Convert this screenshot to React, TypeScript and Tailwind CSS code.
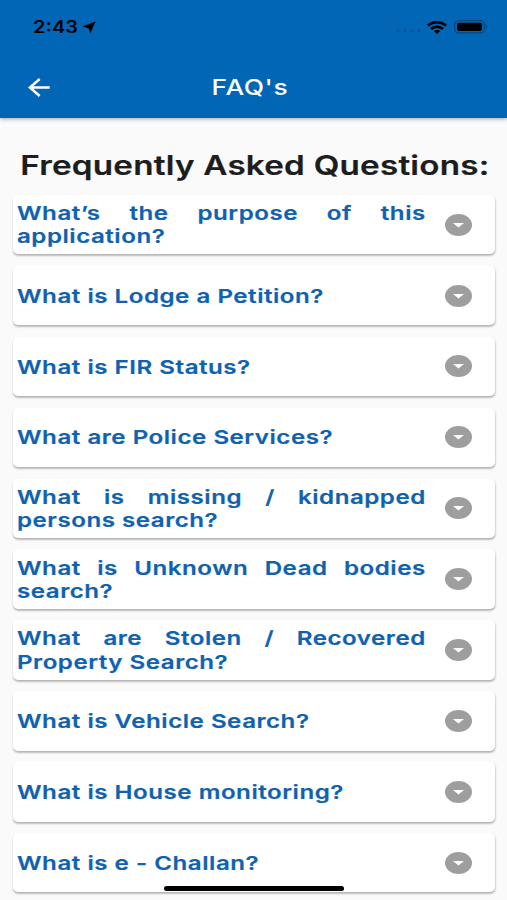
const questions: string[][] = [
  ["What’s the purpose of this", "application?"],
  ["What is Lodge a Petition?"],
  ["What is FIR Status?"],
  ["What are Police Services?"],
  ["What is missing / kidnapped", "persons search?"],
  ["What is Unknown Dead bodies", "search?"],
  ["What are Stolen / Recovered", "Property Search?"],
  ["What is Vehicle Search?"],
  ["What is House monitoring?"],
  ["What is e - Challan?"],
];

function StatusBar() {
  return (
    <div className="flex h-[54px] items-center pl-[33px] pr-[19px] text-black">
      <span className="w-[49px] origin-left scale-x-[1.18] whitespace-nowrap text-[17px] font-semibold leading-none">2:43</span>
      <svg className="h-[13px] w-[14px]" viewBox="0 0 14 13" fill="currentColor">
        <path d="M13.6.6 8.3 12.4 6.6 7.2.2 5.6Z" />
      </svg>
      <div className="ml-auto flex items-center">
        <div className="mr-[6px] mt-[7px] flex gap-[3px]">
          {[0, 1, 2, 3].map((n) => (
            <span key={n} className="h-[3px] w-[4px] rounded-full bg-[#0858a0]" />
          ))}
        </div>
        <svg className="mr-[7px] h-[13px] w-[20px]" viewBox="0 0 20 13" fill="none" stroke="currentColor" strokeWidth="2.6">
          <path d="M.8 4.5Q10-2.3 19.2 4.5M4 7.9q6-4.5 12 0" />
          <path d="M6.7 9.9q3.3-2.5 6.6 0L10 12.9Z" fill="currentColor" stroke="none" />
        </svg>
        <svg className="h-[14px] w-[34px]" viewBox="0 0 34 14">
          <rect x=".7" y=".7" width="29.6" height="12.1" rx="3.6" fill="none" stroke="#07457d" strokeWidth="1.2" />
          <rect x="3" y="2.7" width="25" height="8.2" rx="1.8" fill="#000" />
          <path d="M31.8 4.5q2.4 2.2 0 4.5Z" fill="#07457d" />
        </svg>
      </div>
    </div>
  );
}

function Question({ lines }: { lines: string[] }) {
  return (
    <li className="flex h-[59.4px] shrink-0 items-center rounded-[5px] bg-white pl-[4px] pr-[23px] shadow-[0_2px_2px_rgba(0,0,0,0.22),1px_1px_2px_rgba(0,0,0,0.1)]">
      <div className="w-[327px] origin-left scale-x-[1.25] pt-[1.4px] text-[19.3px] font-semibold leading-[23.3px] tracking-[0.42px] text-[#0f62b0] [-webkit-text-stroke:0.2px_#0f62b0]">
        {lines.map((line, i) => (
          <p
            key={line}
            className={
              lines.length > 1 && i === 0
                ? "whitespace-nowrap [text-align-last:justify]"
                : "whitespace-nowrap"
            }
          >
            {line}
          </p>
        ))}
      </div>
      <svg className="ml-auto h-[22px] w-[27px]" viewBox="0 0 27 22">
        <ellipse cx="13.5" cy="11" rx="13.5" ry="11" fill="#9e9e9e" />
        <path d="M8 8.9h11l-5.5 4.7Z" fill="#fff" />
      </svg>
    </li>
  );
}

export default function App() {
  return (
    <div className="relative h-[900px] w-[507px] overflow-hidden bg-[#fafafa] font-[Inter,'Liberation_Sans',sans-serif]">
      <header className="relative h-[118px] bg-[#0066b5] shadow-[0_1px_4px_rgba(0,0,0,0.35)]">
        <StatusBar />
        <div className="grid h-[66px] grid-cols-[1fr_auto_1fr] items-center pl-[20px] pr-[28px]">
          <svg className="ml-[8px] h-[19px] w-[22px]" viewBox="0 0 22 19" fill="none" stroke="#fff" strokeWidth="2.5">
            <path d="M21.7 9.5H1.8M11.7 1 1.8 9.5l9.9 8.5" />
          </svg>
          <h1 className="scale-x-[1.2] text-[22px] font-medium leading-none tracking-[0.5px] text-white">FAQ's</h1>
        </div>
      </header>
      <main>
        <h2 className="h-[77px] origin-left scale-x-[1.23] whitespace-nowrap pl-[16.5px] pt-[32px] text-[27px] font-semibold leading-[32px] tracking-[0.18px] text-[#1d1d1d] [-webkit-text-stroke:0.2px_#1d1d1d]">
          Frequently Asked Questions:
        </h2>
        <ul className="flex flex-col gap-[11.5px] pl-[13px] pr-[12px]">
          {questions.map((lines) => (
            <Question key={lines[0]} lines={lines} />
          ))}
        </ul>
      </main>
      <div className="absolute bottom-[9px] left-[164px] h-[5px] w-[180px] rounded-full bg-black" />
    </div>
  );
}
